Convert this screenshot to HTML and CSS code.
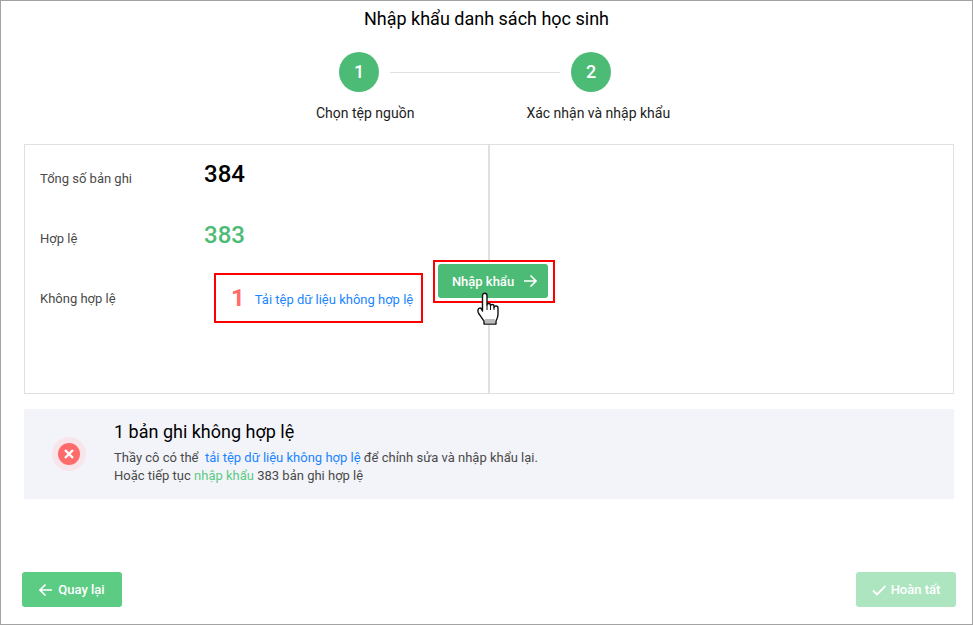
FILE: index.html
```html
<!DOCTYPE html>
<html lang="en">
<head>
    <meta charset="UTF-8">
    <title>Nhập khẩu danh sách học sinh</title>
    <link rel="stylesheet" href="styles.css">
</head>
<body>
    <div class="dialog">
        <h1 class="title">Nhập khẩu danh sách học sinh</h1>

        <!-- Steps -->
        <div class="steps">
            <div class="step-track">
                <div class="step-num">1</div>
                <div class="step-line"></div>
                <div class="step-num">2</div>
            </div>
            <div class="step-labels">
                <div class="step-label">Chọn tệp nguồn</div>
                <div class="step-label">Xác nhận và nhập khẩu</div>
            </div>
        </div>

        <!-- Result card -->
        <div class="card">
            <div class="stats">
                <div class="stat-row">
                    <div class="stat-label">Tổng số bản ghi</div>
                    <div class="stat-value">384</div>
                </div>
                <div class="stat-row">
                    <div class="stat-label">Hợp lệ</div>
                    <div class="stat-value valid">383</div>
                </div>
                <div class="stat-row">
                    <div class="stat-label">Không hợp lệ</div>
                    <div class="invalid-box">
                        <span class="stat-value invalid">1</span>
                        <a class="link" href="#">Tải tệp dữ liệu không hợp lệ</a>
                    </div>
                </div>
            </div>
            <div class="import-box">
                <button class="btn btn-import" type="button">Nhập khẩu
                    <svg class="icon" width="14" height="14" viewBox="0 0 14 14"><path d="M1 7h12M7.500 1.500L13 7l-5.500 5.500" fill="none" stroke="#fff" stroke-width="1.600"/></svg>
                </button>
            </div>
            <svg class="hand" width="24" height="34" viewBox="0 0 24 34">
                <path d="M5.500 3.500C5.500 .5 10 .5 10 3.500V13c0-2 3.500-2 3.500 0v1c0-2 3.500-2 3.500 0v1.500c0-2 4-2 4 .5v6.500c0 3-1 4.500-2 6.500v3H7v-3C5 26.500 3.500 24 1.800 21.500 .3 19.500 .8 16 3 16c1 0 2 1.500 2.500 3z" fill="#fff" stroke="#111" stroke-width="1.400" stroke-linejoin="round"/>
                <path d="M10 13v5M13.500 14v4M17 15v3" fill="none" stroke="#111" stroke-width="1"/>
                <path d="M8 27h10v4.500H8z" fill="#bbb"/>
            </svg>
        </div>

        <!-- Notice -->
        <div class="notice">
            <div class="notice-icon">
                <div class="notice-dot">
                    <svg width="12" height="12" viewBox="0 0 12 12"><path d="M2 2l8 8M10 2l-8 8" fill="none" stroke="#fff" stroke-width="2.400"/></svg>
                </div>
            </div>
            <div class="notice-text">
                <div class="notice-title">1 bản ghi không hợp lệ</div>
                <div class="notice-line">Thầy cô có thể&nbsp; <a class="link" href="#">tải tệp dữ liệu không hợp lệ</a> để chỉnh sửa và nhập khẩu lại.</div>
                <div class="notice-line">Hoặc tiếp tục <a class="link-green" href="#">nhập khẩu</a> 383 bản ghi hợp lệ</div>
            </div>
        </div>

        <!-- Footer buttons -->
        <div class="footer">
            <button class="btn btn-back" type="button">
                <svg class="icon" width="14" height="14" viewBox="0 0 14 14"><path d="M13 7H1M6.500 1.500L1 7l5.500 5.500" fill="none" stroke="#fff" stroke-width="1.600"/></svg>
                Quay lại
            </button>
            <button class="btn btn-finish" type="button">
                <svg class="icon" width="14" height="14" viewBox="0 0 14 14"><path d="M1 7.500l4 4L13.500 3" fill="none" stroke="#fff" stroke-width="1.800"/></svg>
                Hoàn tất
            </button>
        </div>
    </div>
</body>
</html>
```

FILE: styles.css
```css
/* General Styles */
html, body {
    margin: 0;
    height: 100%;
}

body {
    font-family: 'Roboto', sans-serif;
    background-color: #fff;
    color: #4a4a4a;
    overflow: hidden;
}

.dialog {
    box-sizing: border-box;
    width: 973px;
    height: 625px;
    border: 1px solid #a3a3a3;
    display: flex;
    flex-direction: column;
    padding: 0 16px 0 21px;
}

.title {
    margin: 8px 0 0;
    font-size: 18px;
    font-weight: 400;
    line-height: 19px;
    color: #000;
    text-align: center;
    padding-right: 5px;
}

/* Steps */
.steps {
    margin-top: 24px;
    height: 92px;
}

.step-track {
    display: flex;
    align-items: center;
    margin-left: 317px;
}

.step-num {
    width: 40px;
    height: 40px;
    border-radius: 50%;
    background-color: #4cbb75;
    color: #fff;
    font-size: 18px;
    font-weight: 500;
    line-height: 40px;
    text-align: center;
}

.step-line {
    width: 170px;
    height: 1px;
    margin: 0 11px;
    background-color: #e0e0e0;
}

.step-labels {
    display: flex;
    gap: 112px;
    margin: 11px 0 0 294px;
}

.step-label {
    font-size: 14px;
    line-height: 20px;
    color: #222;
    white-space: nowrap;
}

/* Result card */
.card {
    position: relative;
    height: 250px;
    box-sizing: border-box;
    margin: 0 2px;
    border: 1px solid #e0e0e0;
    display: flex;
}

.stats {
    width: 448px;
    border-right: 2px solid #e0e0e0;
    padding: 3px 0 0 15px;
}

.stat-row {
    display: flex;
    align-items: center;
    height: 60px;
}

.stat-label {
    flex: none;
    width: 164px;
    font-size: 13px;
    color: #4a4a4a;
}

.stat-value {
    font-size: 24px;
    font-weight: 500;
    color: #000;
    line-height: 60px;
}

.stat-value.valid {
    color: #4cbb75;
    margin-top: -6px;
}

.stat-row:first-child .stat-value {
    margin-top: -8px;
}

.stat-value.invalid {
    color: #ff6b6b;
    font-weight: 700;
    line-height: 28px;
}

.invalid-box {
    flex: none;
    box-sizing: border-box;
    width: 209px;
    height: 50px;
    margin-left: 10px;
    padding-left: 15px;
    border: 2px solid #f00;
    display: flex;
    align-items: center;
    gap: 10px;
}

.link {
    color: #1a85ff;
    text-decoration: none;
    font-size: 13px;
}

.invalid-box .link {
    margin-top: 3px;
}

/* Button over the divider */
.import-box {
    position: absolute;
    left: 408px;
    top: 115px;
    box-sizing: border-box;
    width: 122px;
    height: 43px;
    border: 2px solid #f00;
    padding: 2px 5px 0 3px;
    background-color: #fff;
}

.btn {
    border: none;
    border-radius: 3px;
    color: #fff;
    font-family: inherit;
    font-size: 13px;
    font-weight: 500;
    display: flex;
    align-items: center;
    justify-content: center;
    gap: 5px;
    padding: 0;
}

.btn-import {
    width: 110px;
    height: 34px;
    padding-left: 3px;
    background-color: #4cbb75;
    gap: 9px;
}

.hand {
    position: absolute;
    left: 452px;
    top: 147px;
}

/* Notice */
.notice {
    height: 90px;
    margin: 15px 2px 0;
    background-color: #f3f4f9;
    display: flex;
    align-items: center;
}

.notice-icon {
    width: 34px;
    height: 34px;
    margin-left: 28px;
    border-radius: 50%;
    background-color: #f8e5ea;
    display: flex;
    align-items: center;
    justify-content: center;
}

.notice-dot {
    width: 22px;
    height: 22px;
    border-radius: 50%;
    background-color: #ff6b6b;
    display: flex;
    align-items: center;
    justify-content: center;
}

.notice-text {
    margin-left: 28px;
}

.notice-title {
    font-size: 18px;
    font-weight: 400;
    line-height: 18px;
    color: #000;
    margin-bottom: 8px;
}

.notice-line {
    font-size: 13px;
    line-height: 18px;
    color: #4a4a4a;
}

.link-green {
    color: #5ccb84;
    text-decoration: none;
}

/* Footer */
.footer {
    display: flex;
    justify-content: space-between;
    margin-top: 73px;
}

.btn-back,
.btn-finish {
    width: 100px;
    height: 35px;
    background-color: #5ccb84;
}

.btn-finish {
    background-color: #aee5c1;
}
```
